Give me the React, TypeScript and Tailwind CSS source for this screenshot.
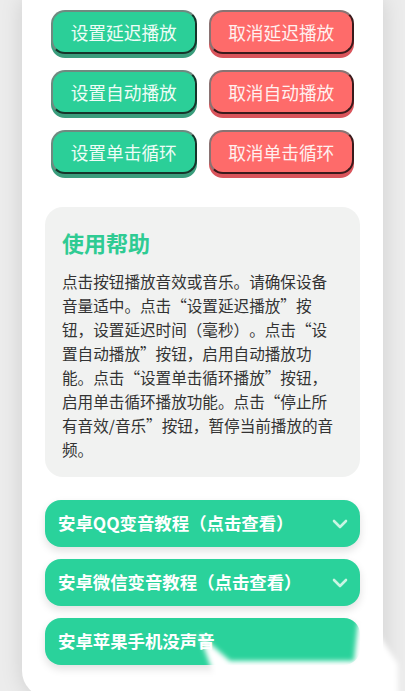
import React from "react";

const font = { fontFamily: '"Noto Sans CJK SC", "Noto Sans", sans-serif' };

function GreenBtn({ label }: { label: string }) {
  return (
    <button
      className="h-[44px] rounded-[14px] bg-[#2bcf98] text-[#eefdf6] text-[17.7px] border-2 border-t-[#6f8a80] border-l-[#6f8a80] border-r-[#16342a] border-b-[#16342a] shadow-[0_4px_0_#3a9d7c] flex items-center justify-center"
    >
      {label}
    </button>
  );
}

function RedBtn({ label }: { label: string }) {
  return (
    <button
      className="h-[44px] rounded-[14px] bg-[#fe6b6a] text-[#fff0ef] text-[17.7px] border-2 border-t-[#8a7272] border-l-[#8a7272] border-r-[#3a1a1c] border-b-[#3a1a1c] shadow-[0_4px_0_#d9545b] flex items-center justify-center"
    >
      {label}
    </button>
  );
}

function Chevron() {
  return (
    <svg width="16" height="10" viewBox="0 0 16 10" fill="none">
      <path d="M2 2 L8 8 L14 2" stroke="#c9f5e4" strokeWidth="2.6" strokeLinecap="round" strokeLinejoin="round" />
    </svg>
  );
}

function Accordion({ label, chevron = true }: { label: string; chevron?: boolean }) {
  return (
    <div className="h-[47px] rounded-[16px] bg-[#2ad29b] shadow-[0_4px_8px_rgba(0,0,0,0.12)] flex items-center justify-between pl-[13px] pr-[12px]">
      <span className="text-white text-[17.4px] font-bold whitespace-nowrap overflow-hidden [text-spacing-trim:space-all]">{label}</span>
      {chevron ? <Chevron /> : null}
    </div>
  );
}

export default function App() {
  return (
    <div className="relative w-[405px] h-[691px] overflow-hidden bg-[#ececec]" style={font}>
      <div className="mx-[22px] bg-white rounded-b-[26px] shadow-[0_0_22px_rgba(0,0,0,0.13)] pt-[10px] pb-[32px]">
        <div className="px-[29px] grid grid-cols-2 gap-x-[12px] gap-y-[16px]">
          <GreenBtn label="设置延迟播放" />
          <RedBtn label="取消延迟播放" />
          <GreenBtn label="设置自动播放" />
          <RedBtn label="取消自动播放" />
          <GreenBtn label="设置单击循环" />
          <RedBtn label="取消单击循环" />
        </div>

        <div className="mx-[23px] mt-[33px] rounded-[18px] bg-[#f1f2f1] pt-[20px] pb-[16px] pl-[17px] pr-[20px]">
          <div className="text-[22px] leading-[30px] font-bold text-[#2fcb93]">使用帮助</div>
          <p className="mt-[12px] text-[15.6px] leading-[24px] text-[#333333] [text-spacing-trim:space-all]">
            点击按钮播放音效或音乐。请确保设备音量适中。点击“设置延迟播放”按钮，设置延迟时间（毫秒）。点击“设置自动播放”按钮，启用自动播放功能。点击“设置单击循环播放”按钮，启用单击循环播放功能。点击“停止所有音效/音乐”按钮，暂停当前播放的音频。
          </p>
        </div>

        <div className="mx-[23px] mt-[23px] flex flex-col gap-[12px]">
          <Accordion label="安卓QQ变音教程（点击查看）" />
          <Accordion label="安卓微信变音教程（点击查看）" />
          <Accordion label="安卓苹果手机没声音" chevron={false} />
        </div>
      </div>

      <svg className="absolute left-0 top-0 pointer-events-none" width="405" height="691" viewBox="0 0 405 691">
        <defs>
          <filter id="wm" x="-20%" y="-20%" width="140%" height="140%">
            <feGaussianBlur stdDeviation="2.5" />
          </filter>
        </defs>
        <polygon
          points="199,634 230,661 354,661 358,622 372,624 398,664 398,700 199,700 214,676"
          fill="#ffffff"
          filter="url(#wm)"
        />
      </svg>
    </div>
  );
}
